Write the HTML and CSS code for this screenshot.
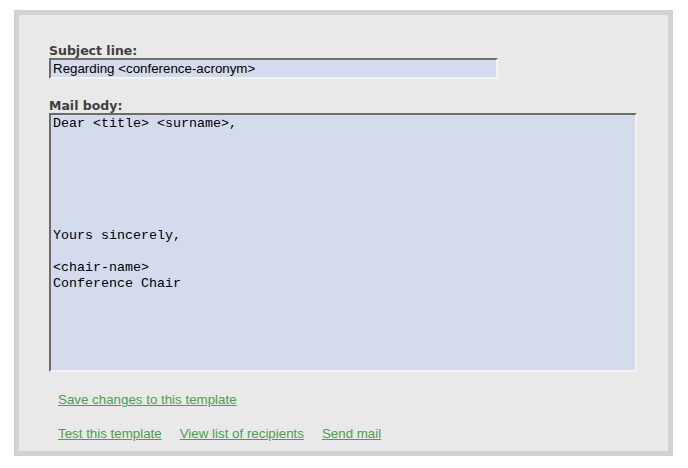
FILE: index.html
```html
<!DOCTYPE html>
<html lang="en">
<head>
    <meta charset="UTF-8">
    <title>Mail template</title>
    <link rel="stylesheet" href="styles.css">
</head>
<body>
    <div class="panel">
        <form class="template-form">
            <label class="field-label" for="subject">Subject line:</label>
            <input type="text" id="subject" class="subject-input" value="Regarding <conference-acronym>">

            <label class="field-label body-label" for="mailbody">Mail body:</label>
            <textarea id="mailbody" class="body-input">Dear &lt;title&gt; &lt;surname&gt;,






Yours sincerely,

&lt;chair-name&gt;
Conference Chair</textarea>
        </form>
        <div class="actions save-row">
            <a href="#" class="action-link">Save changes to this template</a>
        </div>
        <div class="actions mail-row">
            <a href="#" class="action-link">Test this template</a>
            <a href="#" class="action-link">View list of recipients</a>
            <a href="#" class="action-link">Send mail</a>
        </div>
    </div>
</body>
</html>
```

FILE: styles.css
```css
body {
    margin: 0;
    padding: 10px 0 0 14px;
    background: #ffffff;
    font-family: "Liberation Sans", Arial, sans-serif;
}

.panel {
    box-sizing: border-box;
    width: 659px;
    height: 446px;
    background: #e9e9e9;
    border: 5px solid #d2d2d2;
    padding: 28px 0 0 30px;
}

.template-form {
    display: flex;
    flex-direction: column;
    align-items: flex-start;
}

.field-label {
    font-family: "DejaVu Sans", Verdana, sans-serif;
    font-weight: bold;
    font-size: 12.5px;
    line-height: 15px;
    color: #404040;
}

.body-label {
    margin-top: 19px;
}

.subject-input,
.body-input {
    box-sizing: border-box;
    margin: 0;
    background: #d4dbec;
    border-top: 2px solid #6c6c6c;
    border-left: 2px solid #6c6c6c;
    border-right: 2px solid #f2f2f2;
    border-bottom: 2px solid #f2f2f2;
    color: #000000;
    outline: none;
}

.subject-input {
    width: 449px;
    height: 21px;
    padding: 0 2px;
    font-family: "Liberation Sans", Arial, sans-serif;
    font-size: 13.33px;
}

.body-input {
    width: 588px;
    height: 259px;
    padding: 1px 2px;
    resize: none;
    font-family: "Liberation Mono", "Courier New", monospace;
    font-size: 13.33px;
    line-height: 16px;
    overflow: hidden;
}

.actions {
    display: flex;
    gap: 18px;
    padding-left: 9px;
    font-size: 13.33px;
    line-height: 16px;
}

.save-row {
    margin-top: 20px;
}

.mail-row {
    margin-top: 18px;
}

.action-link {
    color: #4f9c4f;
    text-decoration: underline;
}
```
